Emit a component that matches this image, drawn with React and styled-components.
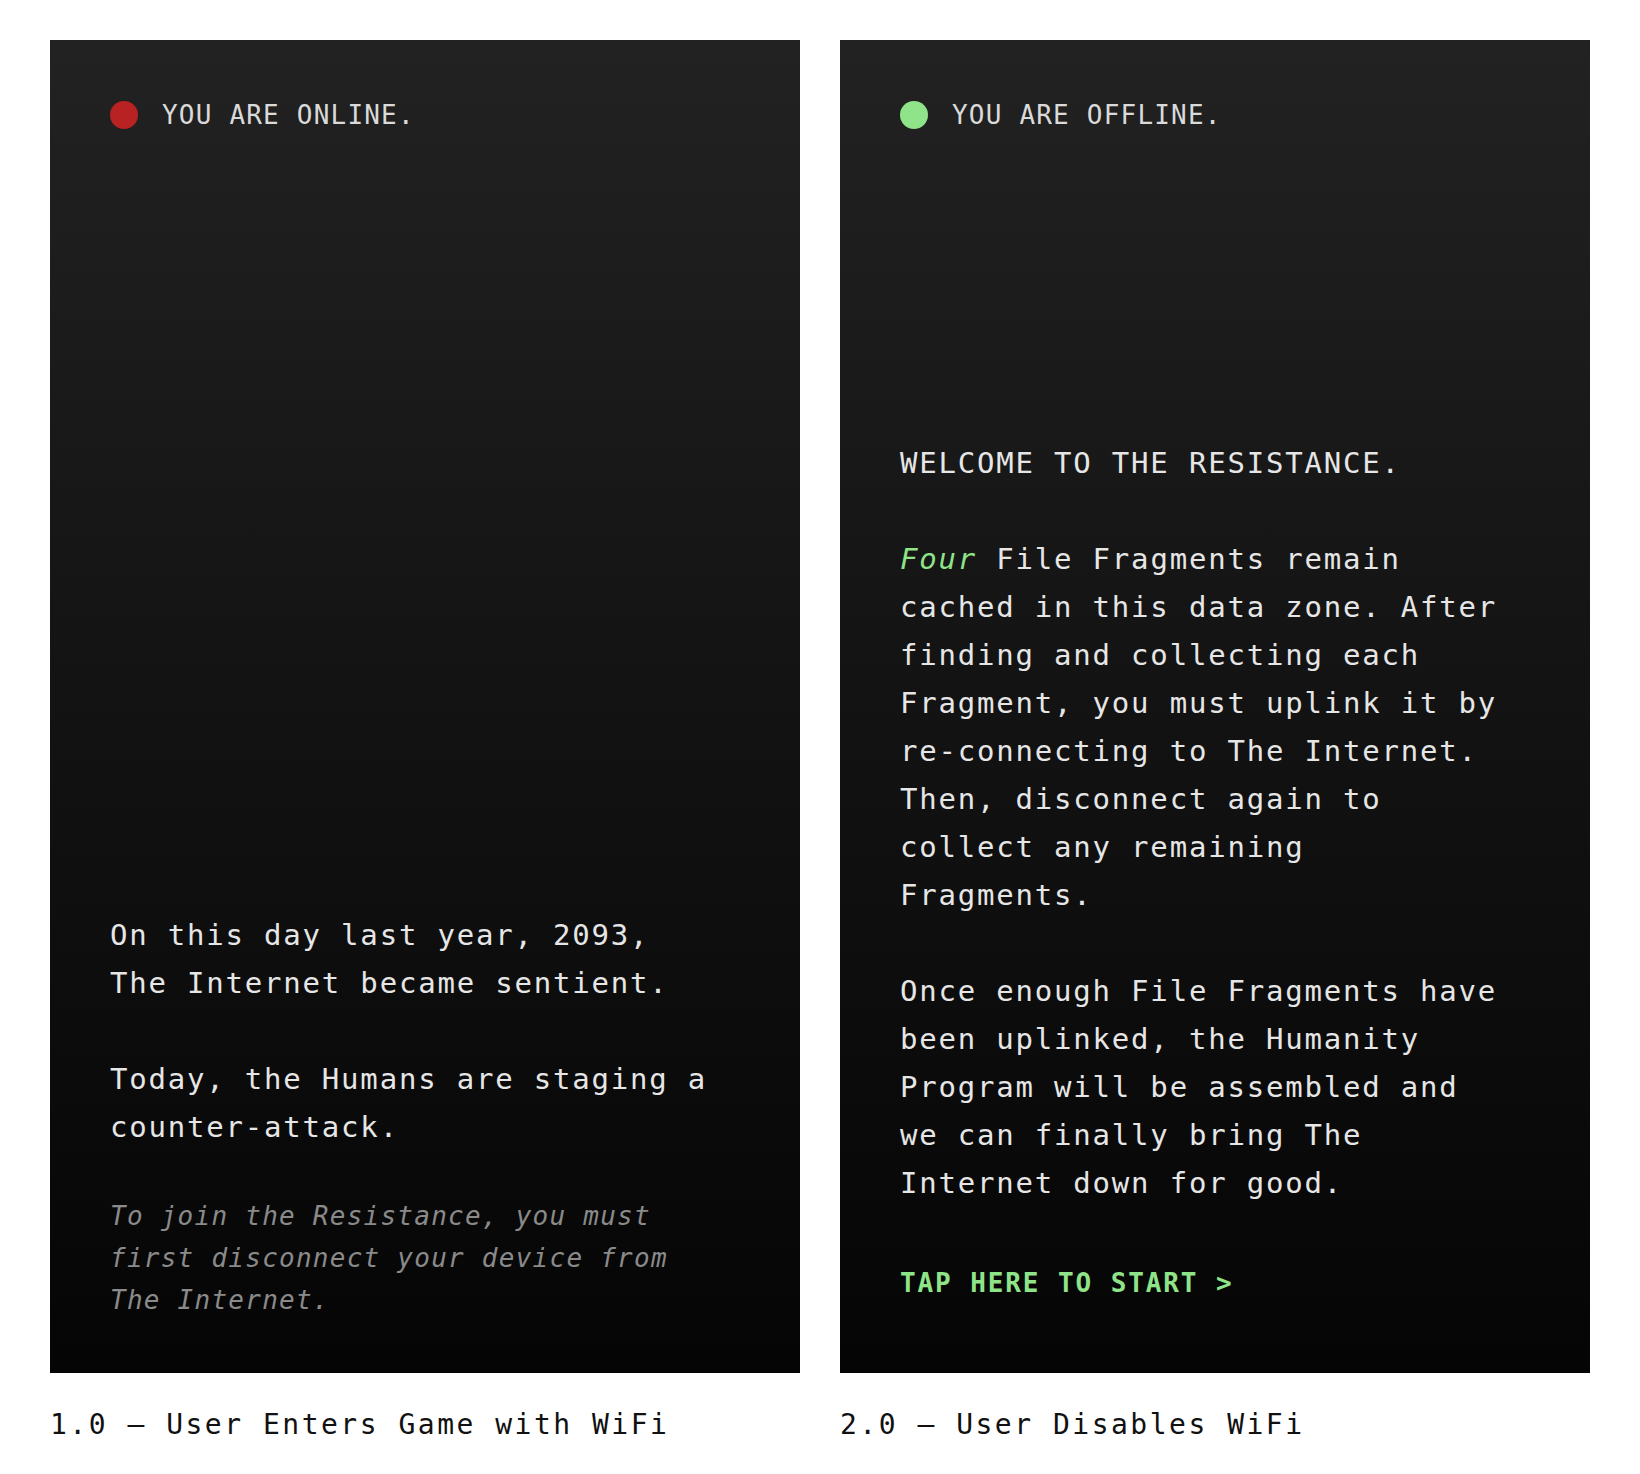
import styled, { createGlobalStyle } from 'styled-components';

const mono = `"DejaVu Sans Mono", "Liberation Mono", monospace`;
const green = '#8fe388';

const GlobalStyle = createGlobalStyle`
  body {
    margin: 0;
    background: #ffffff;
    font-family: ${mono};
  }
`;

const Page = styled.div`
  display: grid;
  grid-template-columns: 750px 750px;
  column-gap: 40px;
  padding: 40px 50px 28px;
`;

const Frame = styled.div`
  display: flex;
  flex-direction: column;
`;

const Screen = styled.div`
  height: 1333px;
  box-sizing: border-box;
  padding: 60px 60px 52px;
  display: flex;
  flex-direction: column;
  background: linear-gradient(180deg, #222222 0%, #141414 45%, #050505 100%);
  color: #e6e6e6;
`;

const Status = styled.div`
  display: flex;
  align-items: center;
  gap: 24px;
  height: 30px;
`;

const Dot = styled.span`
  width: 28px;
  height: 28px;
  border-radius: 50%;
  background: ${({ online }) => (online ? '#b82222' : green)};
  flex: 0 0 auto;
`;

const StatusText = styled.span`
  font-size: 26px;
  line-height: 30px;
  letter-spacing: 1.2px;
  color: #dadada;
`;

const Story = styled.div`
  margin-top: auto;
  max-width: 606px;
`;

const Para = styled.p`
  margin: 0 0 48px;
  font-size: 29px;
  line-height: 48px;
  letter-spacing: 1.8px;
  color: #e6e6e6;

  &:last-child {
    margin-bottom: 0;
  }
`;

const Note = styled.p`
  margin: -4px 0 0;
  font-size: 26px;
  line-height: 42px;
  letter-spacing: 1.25px;
  font-style: italic;
  color: #8a8a8a;
`;

const Highlight = styled.em`
  color: ${green};
  font-style: italic;
`;

const StartButton = styled.button`
  display: block;
  margin: 52px 0 0;
  padding: 0 0 14px;
  border: 0;
  background: none;
  font-family: ${mono};
  font-size: 26px;
  font-weight: 700;
  line-height: 48px;
  letter-spacing: 1.9px;
  color: ${green};
  text-align: left;
  cursor: pointer;
`;

const Caption = styled.div`
  margin-top: 32px;
  font-size: 28px;
  line-height: 40px;
  letter-spacing: 2.5px;
  color: #111111;
`;

export default function App() {
  return (
    <>
      <GlobalStyle />
      <Page>
        <Frame>
          <Screen>
            <Status>
              <Dot online />
              <StatusText>YOU ARE ONLINE.</StatusText>
            </Status>
            <Story>
              <Para>On this day last year, 2093, The Internet became sentient.</Para>
              <Para>Today, the Humans are staging a counter-attack.</Para>
              <Note>To join the Resistance, you must first disconnect your device from The Internet.</Note>
            </Story>
          </Screen>
          <Caption>1.0 — User Enters Game with WiFi</Caption>
        </Frame>
        <Frame>
          <Screen>
            <Status>
              <Dot />
              <StatusText>YOU ARE OFFLINE.</StatusText>
            </Status>
            <Story>
              <Para>WELCOME TO THE RESISTANCE.</Para>
              <Para>
                <Highlight>Four</Highlight> File Fragments remain cached in this data zone. After
                finding and collecting each Fragment, you must uplink it by re-connecting to The
                Internet. Then, disconnect again to collect any remaining Fragments.
              </Para>
              <Para>
                Once enough File Fragments have been uplinked, the Humanity Program will be
                assembled and we can finally bring The Internet down for good.
              </Para>
              <StartButton>TAP HERE TO START &gt;</StartButton>
            </Story>
          </Screen>
          <Caption>2.0 — User Disables WiFi</Caption>
        </Frame>
      </Page>
    </>
  );
}
